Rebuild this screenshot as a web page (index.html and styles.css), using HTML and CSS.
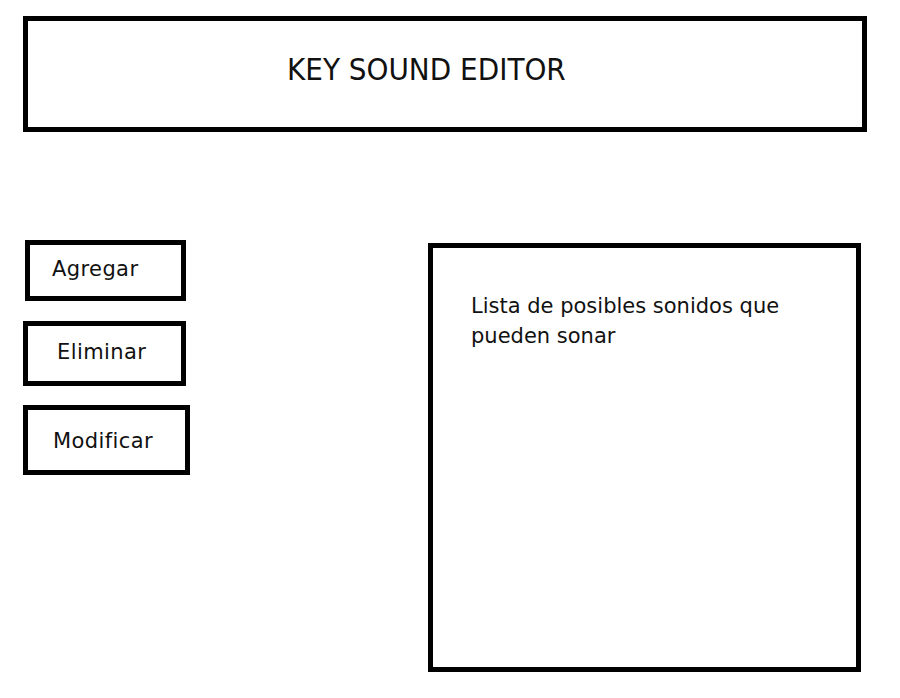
FILE: index.html
```html
<!DOCTYPE html>
<html lang="es">
<head>
  <meta charset="UTF-8">
  <meta name="viewport" content="width=device-width, initial-scale=1.0">
  <title>Key Sound Editor</title>
  <link rel="stylesheet" href="styles.css">
</head>
<body>
  <div class="page">
    <div class="header">
      <h1 class="title">KEY SOUND EDITOR</h1>
    </div>

    <div class="main">
      <div class="actions">
        <div class="btn btn-add">Agregar</div>
        <div class="btn btn-del">Eliminar</div>
        <div class="btn btn-mod">Modificar</div>
      </div>

      <div class="sound-list">
        <p class="list-text">Lista de posibles sonidos que pueden sonar</p>
      </div>
    </div>
  </div>
</body>
</html>
```

FILE: styles.css
```css
body {
  margin: 0;
  padding: 0;
  font-family: "DejaVu Sans", sans-serif;
  background-color: #fff;
  color: #111;
}

.page {
  padding: 16px 0 0 23px;
}

.header {
  box-sizing: border-box;
  width: 844px;
  height: 116px;
  border: 5px solid #000;
  padding: 0 0 0 259px;
  display: flex;
  align-items: center;
}

.title {
  margin: 0 0 11px 0;
  font-family: "DejaVu Sans Condensed", "DejaVu Sans", sans-serif;
  font-size: 31px;
  font-weight: normal;
}

.main {
  display: flex;
  align-items: flex-start;
  margin-top: 108px;
}

.actions {
  width: 405px;
  display: flex;
  flex-direction: column;
}

.btn {
  box-sizing: border-box;
  border: 5px solid #000;
  font-size: 21px;
  letter-spacing: 0.4px;
  display: flex;
  align-items: center;
}

.btn-add {
  width: 161px;
  height: 61px;
  margin-left: 2px;
  padding: 0 0 4px 22px;
}

.btn-del {
  width: 163px;
  height: 65px;
  margin-top: 20px;
  padding: 0 0 4px 29px;
}

.btn-mod {
  width: 167px;
  height: 70px;
  margin-top: 19px;
  padding: 2px 0 0 25px;
}

.sound-list {
  box-sizing: border-box;
  width: 433px;
  height: 429px;
  margin-top: 3px;
  border: 5px solid #000;
  padding: 43px 50px 0 38px;
}

.list-text {
  margin: 0;
  font-size: 21px;
  line-height: 30px;
}
```
